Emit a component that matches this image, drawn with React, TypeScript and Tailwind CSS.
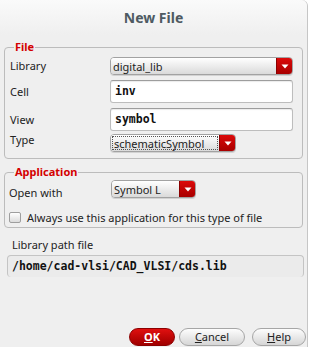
import React from "react";

function Arrow() {
  return (
    <svg width="8" height="5" viewBox="0 0 8 5">
      <path d="M0.5 0.5 L7.5 0.5 L4 4.5 Z" fill="#ffffff" />
    </svg>
  );
}

function Combo({ text, w, focus }: { text: string; w: string; focus?: boolean }) {
  return (
    <div className={`flex h-[18px] ${w} rounded-[4px] border border-[#a2a2a2] overflow-hidden shadow-[0_1px_0_rgba(0,0,0,0.12)]`}>
      <div className="flex-1 flex items-center bg-gradient-to-b from-[#ffffff] to-[#dadada] pl-[1px] pr-[1px] min-w-0">
        {focus ? (
          <div className="h-[14px] flex-1 flex items-center border border-dotted border-[#555] pl-[1px] text-[11px] text-[#222] leading-none">
            {text}
          </div>
        ) : (
          <span className="text-[11px] text-[#222] leading-none pl-[1px]">{text}</span>
        )}
      </div>
      <div className="w-[16px] flex items-center justify-center bg-gradient-to-b from-[#dc0a0a] to-[#a80000] border-l border-[#8a0000]">
        <Arrow />
      </div>
    </div>
  );
}

function TextInput({ value }: { value: string }) {
  return (
    <div className="h-[23px] w-[183px] bg-white rounded-[3px] border border-[#bdbdbd] border-t-[#9d9d9d] shadow-[inset_0_1px_1px_rgba(0,0,0,0.08)] flex items-center pl-[4px]">
      <span className="font-['DejaVu_Sans_Mono',monospace] font-bold text-[11.5px] text-[#111] leading-none">{value}</span>
    </div>
  );
}

function Btn({ children, w, primary }: { children: React.ReactNode; w: string; primary?: boolean }) {
  return (
    <div
      className={
        primary
          ? `h-[18px] ${w} rounded-full flex items-center justify-center bg-gradient-to-b from-[#e01010] to-[#a00000] border border-[#8c0000] text-white font-bold text-[11px]`
          : `h-[18px] ${w} rounded-full flex items-center justify-center bg-gradient-to-b from-[#fdfdfd] to-[#d6d6d6] border border-[#a6a6a6] text-[#222] text-[11px]`
      }
    >
      {children}
    </div>
  );
}

export default function App() {
  return (
    <div className="w-[310px] h-[347px] bg-white font-['Noto_Sans',sans-serif] overflow-hidden">
      <div className="w-[308px] h-[347px] bg-[#efefef] border-r border-[#c6c6c6] rounded-tr-[6px] flex flex-col">
        <div className="h-[35px] shrink-0 flex items-center justify-center bg-gradient-to-b from-[#fafafa] to-[#efefef] rounded-tr-[6px]">
          <span className="text-[14px] font-bold text-[#4e5a62] leading-none">New File</span>
        </div>

        <fieldset className="ml-[4px] mt-[4px] w-[299px] border border-[#bcbcbc] rounded-[4px] pb-[6px]">
          <legend className="ml-[9px] px-[1px] h-[16px] leading-[16px] text-[11px] font-bold text-[#d40000]">File</legend>
          <div className="flex flex-col">
            <div className="flex items-center h-[18px] mt-[2px]">
              <span className="w-[105px] pl-[5px] text-[11px] text-[#222] mt-[1px]">Library</span>
              <Combo text="digital_lib" w="w-[183px]" />
            </div>
            <div className="flex items-center h-[23px] mt-[5px]">
              <span className="w-[105px] pl-[5px] text-[11px] text-[#222] mt-[2px]">Cell</span>
              <TextInput value="inv" />
            </div>
            <div className="flex items-center h-[23px] mt-[5px]">
              <span className="w-[105px] pl-[5px] text-[11px] text-[#222] mt-[2px]">View</span>
              <TextInput value="symbol" />
            </div>
            <div className="flex items-center h-[18px] mt-[3px]">
              <span className="w-[105px] pl-[5px] text-[11px] text-[#222] mb-[5px]">Type</span>
              <Combo text="schematicSymbol" w="w-[126px]" focus />
            </div>
          </div>
        </fieldset>

        <fieldset className="ml-[4px] mt-[5px] w-[299px] border border-[#bcbcbc] rounded-[4px] pb-[4px]">
          <legend className="ml-[9px] px-[1px] h-[16px] leading-[16px] text-[11px] font-bold text-[#d40000]">Application</legend>
          <div className="flex items-start h-[18px]">
            <span className="w-[106px] pl-[4px] pt-[6px] leading-[14px] text-[11px] text-[#222]">Open with</span>
            <Combo text="Symbol L" w="w-[85px]" />
          </div>
          <div className="flex items-center mt-[13px] pl-[4px] h-[12px]">
            <div className="w-[12px] h-[11px] rounded-[2px] border border-[#9e9e9e] bg-gradient-to-b from-[#ffffff] to-[#dcdcdc]" />
            <span className="ml-[6px] text-[11px] text-[#222] leading-none">Always use this application for this type of file</span>
          </div>
        </fieldset>

        <div className="ml-[12px] mt-[10px] h-[13px] leading-[13px] text-[11px] text-[#222]">Library path file</div>
        <div className="ml-[7px] mt-[4px] w-[297px] h-[22px] rounded-[4px] border-t border-x border-[#c4c4c4] bg-[#ebebeb] flex items-center pl-[4px]">
          <span className="font-['DejaVu_Sans_Mono',monospace] font-bold text-[11.5px] text-[#111] leading-none">/home/cad-vlsi/CAD_VLSI/cds.lib</span>
        </div>

        <div className="mt-auto pb-[1px] pr-[1px] flex justify-end items-center gap-[4px]">
          <Btn w="w-[46px]" primary>
            <span className="underline">O</span>K
          </Btn>
          <Btn w="w-[66px]">
            <span className="underline">C</span>ancel
          </Btn>
          <div className="w-0 -ml-[1px]" />
          <Btn w="w-[54px]">
            <span className="underline">H</span>elp
          </Btn>
        </div>
      </div>
    </div>
  );
}
